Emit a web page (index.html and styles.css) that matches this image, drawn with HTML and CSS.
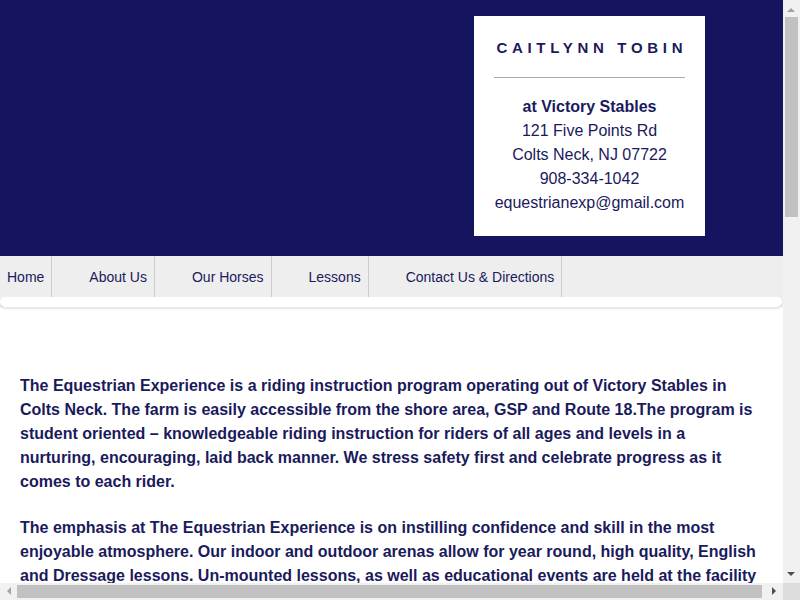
FILE: index.html
```html
<!DOCTYPE html>
<html lang="en">
<head>
<meta charset="utf-8">
<title>The Equestrian Experience</title>
<link rel="stylesheet" href="styles.css">
</head>
<body>
<div class="page">
  <header class="masthead">
    <div class="card">
      <h1 class="card-title">CAITLYNN TOBIN</h1>
      <hr class="card-rule">
      <address class="card-address">
        <strong>at Victory Stables</strong><br>
        121 Five Points Rd<br>
        Colts Neck, NJ 07722<br>
        908-334-1042<br>
        equestrianexp@gmail.com
      </address>
    </div>
  </header>
  <nav class="nav">
    <ul class="nav-list">
      <li class="nav-item"><a href="#">Home</a></li>
      <li class="nav-item"><a href="#">About Us</a></li>
      <li class="nav-item"><a href="#">Our Horses</a></li>
      <li class="nav-item"><a href="#">Lessons</a></li>
      <li class="nav-item"><a href="#">Contact Us &amp; Directions</a></li>
    </ul>
    <div class="nav-strip"></div>
  </nav>
  <main class="content">
    <p>The Equestrian Experience is a riding instruction program operating out of Victory Stables in Colts Neck. The farm is easily accessible from the shore area, GSP and Route 18.The program is student oriented – knowledgeable riding instruction for riders of all ages and levels in a nurturing, encouraging, laid back manner. We stress safety first and celebrate progress as it comes to each rider.</p>
    <p>The emphasis at The Equestrian Experience is on instilling confidence and skill in the most enjoyable atmosphere. Our indoor and outdoor arenas allow for year round, high quality, English and Dressage lessons. Un-mounted lessons, as well as educational events are held at the facility throughout the year, giving riders a well rounded understanding of horse care and horsemanship.</p>
    <p>Lessons are offered for beginners through advanced riders, children and adults alike. Private and semi-private lessons are available seven days a week, and our school horses are kind, experienced partners chosen to help every rider grow.</p>
    <p>Please contact us to schedule a visit to the farm, meet our horses and find the program that is right for you.</p>
  </main>
</div>
<div class="vscroll" aria-hidden="true">
  <span class="arrow arrow-up"></span>
  <span class="vthumb"></span>
  <span class="arrow arrow-down"></span>
</div>
<div class="hscroll" aria-hidden="true">
  <span class="arrow arrow-left"></span>
  <span class="hthumb"></span>
  <span class="arrow arrow-right"></span>
</div>
<div class="scroll-corner" aria-hidden="true"></div>
</body>
</html>
```
FILE: styles.css
```css
html, body {
  margin: 0;
  padding: 0;
}
body {
  font-family: "Liberation Sans", Arial, sans-serif;
  color: #1a1a5c;
  background: #ffffff;
}
.page {
  width: 783px;
}
.masthead {
  background: #14145f;
  height: 256px;
  box-sizing: border-box;
  padding: 16px 78px 0 0;
  display: flex;
  justify-content: flex-end;
  align-items: flex-start;
}
.card {
  background: #ffffff;
  width: 231px;
  height: 220px;
  box-sizing: border-box;
  padding: 20px 20px 0;
  text-align: center;
}
.card-title {
  margin: 0 -12px;
  font-size: 15px;
  line-height: 24px;
  font-weight: bold;
  letter-spacing: 4.7px;
  padding-left: 4.7px;
  white-space: nowrap;
  color: #1a1a5c;
}
.card-rule {
  margin: 17px 0 0;
  border: 0;
  height: 1px;
  background: #a9a9a9;
}
.card-address {
  margin-top: 17px;
  font-style: normal;
  font-size: 16px;
  line-height: 24px;
  color: #1a1a5c;
}
.nav {
  background: #eeeeee;
}
.nav-list {
  list-style: none;
  margin: 0;
  padding: 0;
  display: flex;
  height: 41px;
}
.nav-item {
  border-right: 1px solid #cccccc;
  padding: 0 7px;
  margin-left: 30px;
}
.nav-item:first-child {
  margin-left: 0;
}
.nav-item a {
  display: block;
  font-size: 14px;
  line-height: 41px;
  padding-top: 1px;
  color: #1a1a5c;
  text-decoration: none;
}
.nav-strip {
  height: 10px;
  width: 782px;
  background: #ffffff;
  border-radius: 5px;
  box-shadow: 0 2px 2px rgba(0, 0, 0, 0.1);
}
.content {
  box-sizing: border-box;
  min-height: 1343px;
  padding: 67px 0 40px 20px;
  width: 760px;
}
.content p {
  margin: 0 0 22px;
  font-size: 16px;
  line-height: 24px;
  font-weight: bold;
  color: #1a1a5c;
}

/* browser scrollbars, as seen in the screenshot */
.vscroll {
  position: fixed;
  top: 0;
  right: 0;
  width: 17px;
  height: 583px;
  background: #f1f1f1;
}
.hscroll {
  position: fixed;
  left: 0;
  bottom: 0;
  width: 783px;
  height: 17px;
  background: #f1f1f1;
}
.scroll-corner {
  position: fixed;
  right: 0;
  bottom: 0;
  width: 17px;
  height: 17px;
  background: #dcdcdc;
}
.vthumb {
  position: absolute;
  left: 2px;
  top: 17px;
  width: 13px;
  height: 200px;
  background: #c1c1c1;
}
.hthumb {
  position: absolute;
  top: 2px;
  left: 17px;
  width: 745px;
  height: 13px;
  background: #c1c1c1;
}
.arrow {
  position: absolute;
  width: 0;
  height: 0;
  border: 4px solid transparent;
}
.arrow-up {
  left: 4px;
  top: 4px;
  border-bottom-color: #a3a3a3;
}
.arrow-down {
  left: 4px;
  bottom: 3px;
  border-top-color: #505050;
}
.arrow-left {
  left: 3px;
  top: 4px;
  border-right-color: #a3a3a3;
}
.arrow-right {
  right: 3px;
  top: 4px;
  border-left-color: #505050;
}
```
